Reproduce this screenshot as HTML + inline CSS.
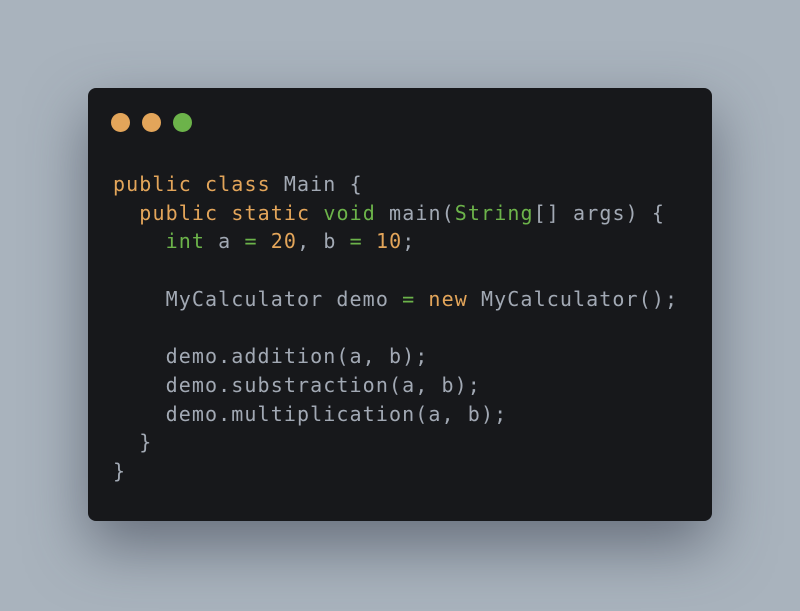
<!DOCTYPE html>
<html><head><style>
html,body{margin:0;padding:0;}
body{width:800px;height:611px;background:#a9b3bd;position:relative;overflow:hidden;}
.card{position:absolute;left:88px;top:88px;width:624px;height:433px;background:#17181b;border-radius:8px;box-shadow:0 25px 60px rgba(60,66,82,0.6);}
.dot{position:absolute;top:113px;width:19px;height:19px;border-radius:50%;}
pre{position:absolute;left:113px;top:170px;margin:0;font-family:"DejaVu Sans Mono","Liberation Mono",monospace;font-size:20px;letter-spacing:1.1px;line-height:28.7px;color:#a2a9b4;}
.o{color:#e3a55a}.g{color:#6cb34a}
</style></head><body>
<div class="card"></div>
<div class="dot" style="left:111px;background:#e3a55a"></div>
<div class="dot" style="left:142px;background:#e3a55a"></div>
<div class="dot" style="left:173px;background:#6cb34a"></div>
<pre><span class="o">public</span> <span class="o">class</span> Main {
  <span class="o">public</span> <span class="o">static</span> <span class="g">void</span> main(<span class="g">String</span>[] args) {
    <span class="g">int</span> a <span class="g">=</span> <span class="o">20</span>, b <span class="g">=</span> <span class="o">10</span>;

    MyCalculator demo <span class="g">=</span> <span class="o">new</span> MyCalculator();

    demo.addition(a, b);
    demo.substraction(a, b);
    demo.multiplication(a, b);
  }
}</pre>
</body></html>
